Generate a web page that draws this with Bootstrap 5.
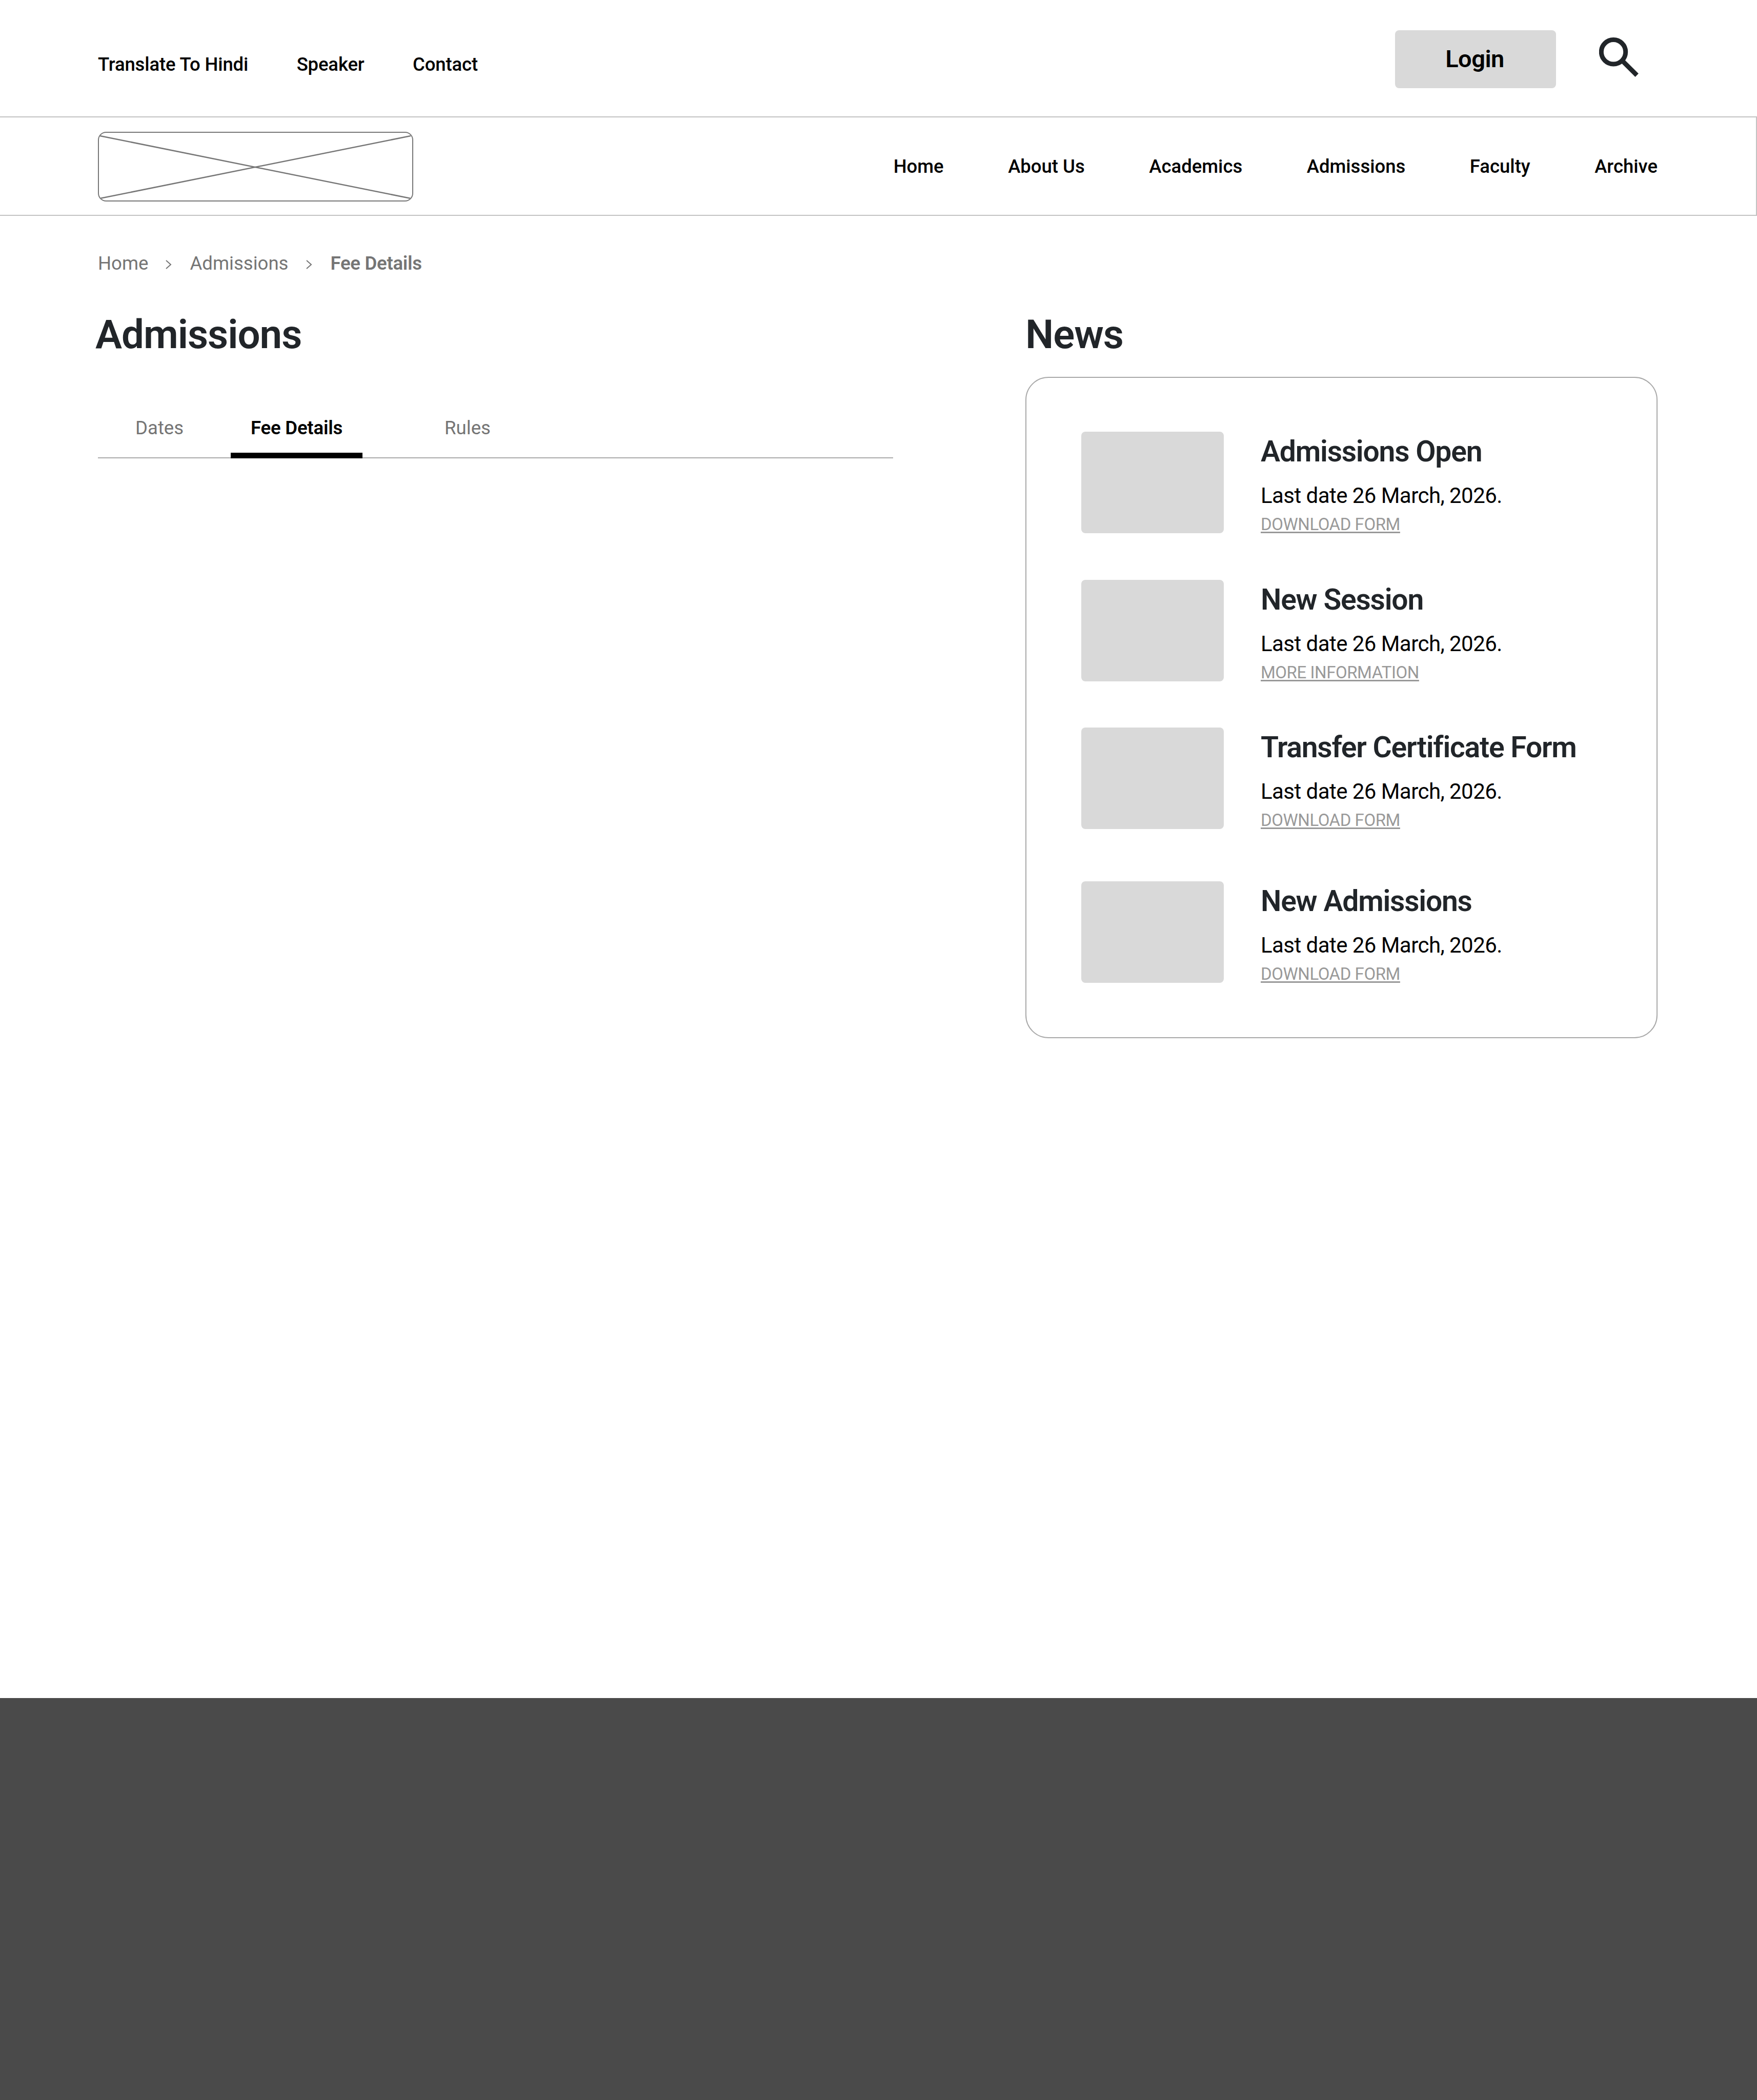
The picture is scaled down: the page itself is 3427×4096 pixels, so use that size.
<!DOCTYPE html>
<html>
<head>
    <title>Admissions - Fee Details</title>
    <meta charset="utf-8">
    <meta name="viewport" content="width=device-width, initial-scale=1">
    <link href="https://cdn.jsdelivr.net/npm/bootstrap@5.3.3/dist/css/bootstrap.min.css" rel="stylesheet">
    <style>
        body {font-family: Roboto, "Liberation Sans", sans-serif; color: #000; background: #fff;}
        a {text-decoration: none;}

        .top-strip {height: 227px; padding: 0 230px 0 191px;}
        .top-links {gap: 94.5px; font-size: 36.5px; font-weight: 500; margin-top: 25px; letter-spacing: -0.15px;}
        .top-links a {color: #000;}
        .login-btn {width: 314px; height: 113px; margin-top: 4px; background: #d9d9d9; border: 0; border-radius: 8px; font-size: 47px; font-weight: 600; letter-spacing: -0.5px; color: #000; padding: 0 3px 0 0;}
        .search-icon {width: 78px; height: 78px; margin: -3px 0 0 84px;}

        .main-nav {height: 194px; padding: 0 192px 0 191px; border: 2px solid #c2c2c2; border-left: 0;}
        .logo-box {width: 615px; height: 136px; margin-top: 2px; border: 2px solid #777; border-radius: 16px; overflow: hidden;}
        .logo-box svg {width: 100%; height: 100%; display: block;}
        .main-links {gap: 125.5px; font-size: 36.5px; font-weight: 500; margin-top: 3px;}
        .main-links a {color: #000;}

        .page-body {height: 2891px; padding: 0 192px 0 191px;}
        .crumbs {padding-top: 71px; font-size: 36.6px; color: #757575; line-height: 44px;}
        .crumbs a {color: #757575;}
        .crumbs svg {width: 13px; height: 20px; margin: 4px 35px 0 33px;}
        .crumbs span {font-weight: 600; letter-spacing: -0.3px; margin-left: 1px;}
        .left-side {width: 1551px;}
        .right-side {width: 1233px; margin-left: 258px;}
        .page-title {font-size: 78px; font-weight: 600; color: #212529; line-height: 92px; margin: 0; letter-spacing: -1px;}
        .left-title {margin: 71px 0 0 -5px;}
        .right-title {margin-top: 186px;}

        .tab-row {margin-top: 98px; height: 97px; border-bottom: 2px solid #aaa; font-size: 36.6px;}
        .tab-row a {display: block; color: #757575; height: 97px; line-height: 76px; text-align: center;}
        .tab-row .tab-one {width: 259px; padding-left: 73px; text-align: left;}
        .tab-row .tab-two {width: 257px; color: #000; font-weight: 600; letter-spacing: -0.2px; border-bottom: 11px solid #000;}
        .tab-row .tab-three {width: 410px;}

        .news-box {margin-top: 36px; height: 1290px; border: 2px solid #a8a8a8; border-radius: 45px; padding: 105px 40px 0 107px;}
        .news-row {height: 198px; margin-bottom: 90.5px;}
        .news-row.last-gap {margin-bottom: 102px;}
        .news-thumb {width: 278px; height: 198px; background: #d9d9d9; border-radius: 8px; flex: none;}
        .news-text {margin-left: 72px;}
        .news-text h5 {font-size: 57px; font-weight: 600; color: #212529; line-height: 68px; margin: 5px 0 0 0; letter-spacing: -1.2px;}
        .news-text p {font-size: 42px; color: #000; line-height: 50px; margin: 27px 0 0 0; letter-spacing: -0.55px;}
        .news-text a {display: inline-block; font-size: 33px; line-height: 38px; color: #999; text-decoration: underline; text-underline-offset: 3px; margin-top: 12px; letter-spacing: -0.45px;}

        .page-foot {height: 784px; background: #4a4a4a;}
    </style>
</head>
<body>
    <div class="top-strip d-flex align-items-center justify-content-between">
        <div class="top-links d-flex">
            <a href="#">Translate To Hindi</a>
            <a href="#">Speaker</a>
            <a href="#">Contact</a>
        </div>
        <div class="d-flex align-items-center">
            <button class="btn login-btn">Login</button>
            <svg class="search-icon" viewBox="0 0 78 78">
                <circle cx="28" cy="28.3" r="23.7" fill="none" stroke="#212529" stroke-width="9"/>
                <line x1="44.5" y1="44.8" x2="73.7" y2="73.7" stroke="#212529" stroke-width="9"/>
            </svg>
        </div>
    </div>

    <nav class="main-nav d-flex align-items-center justify-content-between">
        <div class="logo-box">
            <svg viewBox="0 0 611 132" preserveAspectRatio="none">
                <line x1="2" y1="6" x2="608" y2="128" stroke="#777" stroke-width="2.5"/>
                <line x1="2" y1="128" x2="608" y2="6" stroke="#777" stroke-width="2.5"/>
            </svg>
        </div>
        <div class="main-links d-flex">
            <a href="#">Home</a>
            <a href="#">About Us</a>
            <a href="#">Academics</a>
            <a href="#">Admissions</a>
            <a href="#">Faculty</a>
            <a href="#">Archive</a>
        </div>
    </nav>

    <main class="page-body d-flex">
        <div class="left-side">
            <div class="crumbs d-flex align-items-center">
                <a href="#">Home</a>
                <svg viewBox="0 0 13 20"><path d="M2 2l9 8-9 8" fill="none" stroke="#757575" stroke-width="2"/></svg>
                <a href="#">Admissions</a>
                <svg viewBox="0 0 13 20"><path d="M2 2l9 8-9 8" fill="none" stroke="#757575" stroke-width="2"/></svg>
                <span>Fee Details</span>
            </div>
            <h1 class="page-title left-title">Admissions</h1>
            <div class="tab-row d-flex">
                <a class="tab-one" href="#">Dates</a>
                <a class="tab-two" href="#">Fee Details</a>
                <a class="tab-three" href="#">Rules</a>
            </div>
        </div>

        <div class="right-side">
            <h2 class="page-title right-title">News</h2>
            <div class="news-box">
                <div class="news-row d-flex">
                    <div class="news-thumb"></div>
                    <div class="news-text">
                        <h5>Admissions Open</h5>
                        <p>Last date 26 March, 2026.</p>
                        <a href="#">DOWNLOAD FORM</a>
                    </div>
                </div>
                <div class="news-row d-flex">
                    <div class="news-thumb"></div>
                    <div class="news-text">
                        <h5>New Session</h5>
                        <p>Last date 26 March, 2026.</p>
                        <a href="#">MORE INFORMATION</a>
                    </div>
                </div>
                <div class="news-row last-gap d-flex">
                    <div class="news-thumb"></div>
                    <div class="news-text">
                        <h5>Transfer Certificate Form</h5>
                        <p>Last date 26 March, 2026.</p>
                        <a href="#">DOWNLOAD FORM</a>
                    </div>
                </div>
                <div class="news-row d-flex">
                    <div class="news-thumb"></div>
                    <div class="news-text">
                        <h5>New Admissions</h5>
                        <p>Last date 26 March, 2026.</p>
                        <a href="#">DOWNLOAD FORM</a>
                    </div>
                </div>
            </div>
        </div>
    </main>

    <footer class="page-foot"></footer>

    <script src="https://cdn.jsdelivr.net/npm/bootstrap@5.3.3/dist/js/bootstrap.bundle.min.js"></script>
</body>
</html>
